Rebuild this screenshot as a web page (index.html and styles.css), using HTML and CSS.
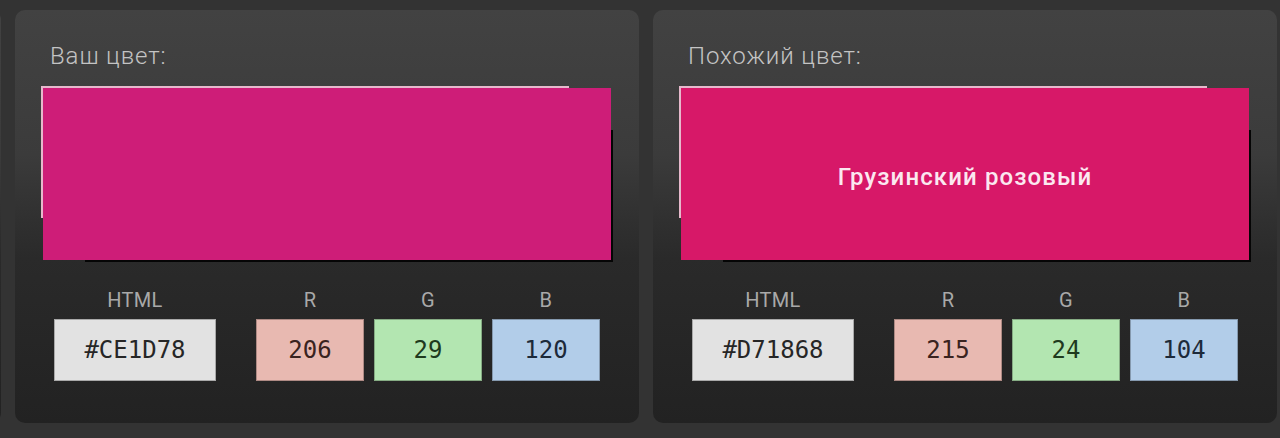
FILE: index.html
```html
<!DOCTYPE html>
<html lang="ru">
<head>
<meta charset="utf-8">
<title>Цвет</title>
<link rel="stylesheet" href="styles.css">
</head>
<body>
<div class="row">
  <section class="card" aria-hidden="true"></section>
  <section class="card">
    <div class="card-title">Ваш цвет:</div>
    <div class="swatch" style="background:#CE1D78"></div>
    <div class="values">
      <div class="field field-html">
        <div class="field-label">HTML</div>
        <div class="field-box box-html">#CE1D78</div>
      </div>
      <div class="channels">
        <div class="field">
          <div class="field-label">R</div>
          <div class="field-box box-r">206</div>
        </div>
        <div class="field">
          <div class="field-label">G</div>
          <div class="field-box box-g">29</div>
        </div>
        <div class="field">
          <div class="field-label">B</div>
          <div class="field-box box-b">120</div>
        </div>
      </div>
    </div>
  </section>
  <section class="card">
    <div class="card-title">Похожий цвет:</div>
    <div class="swatch" style="background:#D71868"><span class="swatch-name">Грузинский розовый</span></div>
    <div class="values">
      <div class="field field-html">
        <div class="field-label">HTML</div>
        <div class="field-box box-html">#D71868</div>
      </div>
      <div class="channels">
        <div class="field">
          <div class="field-label">R</div>
          <div class="field-box box-r">215</div>
        </div>
        <div class="field">
          <div class="field-label">G</div>
          <div class="field-box box-g">24</div>
        </div>
        <div class="field">
          <div class="field-label">B</div>
          <div class="field-box box-b">104</div>
        </div>
      </div>
    </div>
  </section>
</div>
</body>
</html>
```

FILE: styles.css
```css
html, body {
  margin: 0;
  padding: 0;
}
body {
  background: #333333;
  height: 438px;
  overflow: hidden;
  font-family: Roboto, "Liberation Sans", sans-serif;
}
.row {
  display: flex;
  gap: 14px;
  padding-top: 10px;
  margin-left: -623px;
}
.card {
  flex: 0 0 624px;
  height: 413px;
  box-sizing: border-box;
  border-radius: 10px;
  background: linear-gradient(to bottom, #424242 0%, #3b3b3b 35%, #2a2a2a 60%, #222222 100%);
  padding: 28px 0 0 28px;
}
.card-title {
  padding-left: 7px;
  font-size: 24px;
  font-weight: 300;
  line-height: 36px;
  height: 50px;
  color: #c4c4c4;
  letter-spacing: 0.9px;
}
.swatch {
  width: 568px;
  height: 172px;
  display: flex;
  align-items: center;
  justify-content: center;
  box-shadow: -22px -22px 0 -20px #e6b9cc, 22px 22px 0 -20px #050505;
}
.swatch-name {
  font-family: Roboto, "Liberation Sans", sans-serif;
  font-weight: 500;
  font-size: 24px;
  padding-top: 6px;
  color: #fbe8f0;
  letter-spacing: 1.1px;
}
.values {
  display: flex;
  gap: 40px;
  margin: 28px 0 0 11px;
}
.channels {
  display: flex;
  gap: 10px;
}
.field {
  display: flex;
  flex-direction: column;
  align-items: center;
}
.field-label {
  font-size: 20px;
  line-height: 24px;
  color: #a9a9a9;
  height: 31px;
  letter-spacing: 0.3px;
}
.field-box {
  width: 108px;
  height: 62px;
  box-sizing: border-box;
  border: 1px solid rgba(0, 0, 0, 0.25);
  display: flex;
  align-items: center;
  justify-content: center;
  font-family: "DejaVu Sans Mono", "Liberation Mono", monospace;
  font-size: 24px;
  color: #262626;
}
.box-html {
  width: 162px;
  background: #e2e2e2;
}
.box-r {
  background: #e8b9b1;
  color: #3a2320;
}
.box-g {
  background: #b3e6b1;
  color: #1f3a1e;
}
.box-b {
  background: #b2cde9;
  color: #1d2a3a;
}
```
